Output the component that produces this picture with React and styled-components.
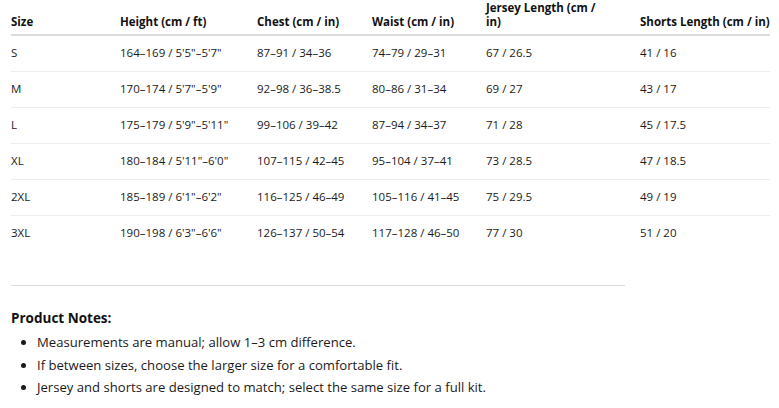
import React from "react";
import styled, { createGlobalStyle } from "styled-components";

const GlobalStyle = createGlobalStyle`
	html, body {
		margin: 0;
		padding: 0;
		background: #ffffff;
	}
	body {
		font-family: "Open Sans", "Noto Sans", sans-serif;
		color: #1a1a1a;
	}
`;

const Page = styled.div`
	padding: 0 9px 0 11px;
	width: 779px;
	box-sizing: border-box;
`;

const SizeTable = styled.table`
	width: 759px;
	table-layout: fixed;
	border-collapse: collapse;
	font-size: 11.5px;
`;

const HeadCell = styled.th`
	text-align: left;
	vertical-align: bottom;
	font-weight: 700;
	color: #111;
	line-height: 14px;
	padding: 1px 30px 5px 0;
	border-bottom: 2px solid #dcdcdc;
	&:last-child {
		padding-right: 0;
		white-space: nowrap;
	}
`;

const Row = styled.tr`
	border-bottom: ${(p) => (p.$last ? "none" : "1px solid #ececec")};
`;

const Cell = styled.td`
	height: 36px;
	box-sizing: border-box;
	padding: 0 8px 0 0;
	line-height: 14px;
	vertical-align: middle;
	white-space: nowrap;
`;

const Divider = styled.hr`
	width: 614px;
	margin: 34px 0 0 0;
	border: none;
	border-top: 1px solid #dcdcdc;
`;

const NotesTitle = styled.h4`
	margin: 24px 0 0 0;
	font-size: 13.5px;
	font-weight: 700;
	line-height: 16px;
	color: #111;
`;

const NotesList = styled.ul`
	margin: 5px 0 0 0;
	padding-left: 26px;
	font-size: 13.1px;
	line-height: 22.5px;
`;

const columns = [
	{ label: "Size", width: 109 },
	{ label: "Height (cm / ft)", width: 137 },
	{ label: "Chest (cm / in)", width: 115 },
	{ label: "Waist (cm / in)", width: 114 },
	{ label: "Jersey Length (cm / in)", width: 154 },
	{ label: "Shorts Length (cm / in)", width: 130 }
];

const rows = [
	["S", "164–169 / 5'5\"–5'7\"", "87–91 / 34–36", "74–79 / 29–31", "67 / 26.5", "41 / 16"],
	["M", "170–174 / 5'7\"–5'9\"", "92–98 / 36–38.5", "80–86 / 31–34", "69 / 27", "43 / 17"],
	["L", "175–179 / 5'9\"–5'11\"", "99–106 / 39–42", "87–94 / 34–37", "71 / 28", "45 / 17.5"],
	["XL", "180–184 / 5'11\"–6'0\"", "107–115 / 42–45", "95–104 / 37–41", "73 / 28.5", "47 / 18.5"],
	["2XL", "185–189 / 6'1\"–6'2\"", "116–125 / 46–49", "105–116 / 41–45", "75 / 29.5", "49 / 19"],
	["3XL", "190–198 / 6'3\"–6'6\"", "126–137 / 50–54", "117–128 / 46–50", "77 / 30", "51 / 20"]
];

const notes = [
	"Measurements are manual; allow 1–3 cm difference.",
	"If between sizes, choose the larger size for a comfortable fit.",
	"Jersey and shorts are designed to match; select the same size for a full kit."
];

export default function App() {
	return (
		<Page>
			<GlobalStyle />
			<SizeTable>
				<colgroup>
					{columns.map((c) => (
						<col key={c.label} style={{ width: c.width }} />
					))}
				</colgroup>
				<thead>
					<tr>
						{columns.map((c) => (
							<HeadCell key={c.label}>{c.label}</HeadCell>
						))}
					</tr>
				</thead>
				<tbody>
					{rows.map((r, i) => (
						<Row key={r[0]} $last={i === rows.length - 1}>
							{r.map((v, j) => (
								<Cell key={j}>{v}</Cell>
							))}
						</Row>
					))}
				</tbody>
			</SizeTable>
			<Divider />
			<NotesTitle>Product Notes:</NotesTitle>
			<NotesList>
				{notes.map((n) => (
					<li key={n}>{n}</li>
				))}
			</NotesList>
		</Page>
	);
}
